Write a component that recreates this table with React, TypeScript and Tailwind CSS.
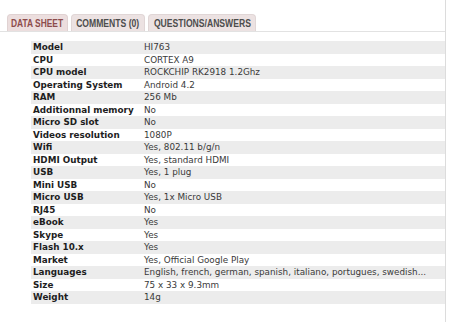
import React from "react";

const rows: [string, string][] = [
  ["Model", "HI763"],
  ["CPU", "CORTEX A9"],
  ["CPU model", "ROCKCHIP RK2918 1.2Ghz"],
  ["Operating System", "Android 4.2"],
  ["RAM", "256 Mb"],
  ["Additionnal memory", "No"],
  ["Micro SD slot", "No"],
  ["Videos resolution", "1080P"],
  ["Wifi", "Yes, 802.11 b/g/n"],
  ["HDMI Output", "Yes, standard HDMI"],
  ["USB", "Yes, 1 plug"],
  ["Mini USB", "No"],
  ["Micro USB", "Yes, 1x Micro USB"],
  ["RJ45", "No"],
  ["eBook", "Yes"],
  ["Skype", "Yes"],
  ["Flash 10.x", "Yes"],
  ["Market", "Yes, Official Google Play"],
  ["Languages", "English, french, german, spanish, italiano, portugues, swedish..."],
  ["Size", "75 x 33 x 9.3mm"],
  ["Weight", "14g"],
];

export default function App() {
  return (
    <div className="w-[450px] h-[322px] bg-white overflow-hidden font-['DejaVu_Sans',Verdana,sans-serif]">
      <div className="w-[446px] pt-[14px] border-r border-[#dcdcdc] h-[322px]">
        <div className="flex gap-[3px] pl-[7px] h-[18px] border-b border-[#e2e2e2] font-['Liberation_Sans',Arial,sans-serif] font-bold text-[10px]">
          <div className="w-[61px] h-[17px] rounded-t-[4px] bg-[#ecdede] border border-b-0 border-[#e0d2d2] flex items-center justify-center text-[#8d4c4c]">
            <span className="inline-block whitespace-nowrap scale-x-[0.84]">DATA SHEET</span>
          </div>
          <div className="w-[74px] h-[17px] rounded-t-[4px] bg-[#ece2e2] border border-b-0 border-[#e0d6d6] flex items-center justify-center text-[#4d4d4d]">
            <span className="inline-block whitespace-nowrap scale-x-[0.86]">COMMENTS (0)</span>
          </div>
          <div className="w-[108px] h-[17px] rounded-t-[4px] bg-[#ece2e2] border border-b-0 border-[#e0d6d6] flex items-center justify-center text-[#4d4d4d]">
            <span className="inline-block whitespace-nowrap scale-x-[0.86]">QUESTIONS/ANSWERS</span>
          </div>
        </div>
        <div className="pt-[9px] pl-[31px]">
          {rows.map(([k, v], i) => (
            <div
              key={k}
              className={`flex h-[12.5px] leading-[12.5px] text-[8.8px] ${i % 2 === 0 ? "bg-[#ececec]" : "bg-white"}`}
            >
              <div className="w-[113px] pl-[2px] font-bold text-[#1e1e1e] whitespace-nowrap">{k}</div>
              <div className="text-[#3a3a3a] whitespace-nowrap">{v}</div>
            </div>
          ))}
        </div>
      </div>
    </div>
  );
}
